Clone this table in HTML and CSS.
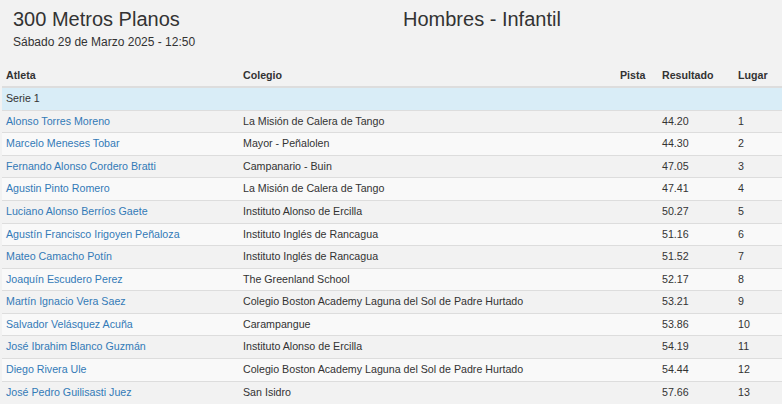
FILE: index.html
```html
<!DOCTYPE html>
<html lang="es">
<head>
<meta charset="utf-8">
<title>300 Metros Planos</title>
<link rel="stylesheet" href="styles.css">
</head>
<body>
<header class="head">
  <div class="head-row">
    <h1 class="title">300 Metros Planos</h1>
    <h2 class="category">Hombres - Infantil</h2>
  </div>
  <p class="date">Sábado 29 de Marzo 2025 - 12:50</p>
</header>
<table class="results">
  <colgroup>
    <col class="c-atleta"><col class="c-colegio"><col class="c-pista"><col class="c-res"><col class="c-lugar">
  </colgroup>
  <thead>
    <tr><th>Atleta</th><th>Colegio</th><th>Pista</th><th>Resultado</th><th>Lugar</th></tr>
  </thead>
  <tbody>
    <tr class="serie"><td colspan="5">Serie 1</td></tr>
    <tr><td><a href="#">Alonso Torres Moreno</a></td><td>La Misión de Calera de Tango</td><td></td><td>44.20</td><td>1</td></tr>
    <tr><td><a href="#">Marcelo Meneses Tobar</a></td><td>Mayor - Peñalolen</td><td></td><td>44.30</td><td>2</td></tr>
    <tr><td><a href="#">Fernando Alonso Cordero Bratti</a></td><td>Campanario - Buin</td><td></td><td>47.05</td><td>3</td></tr>
    <tr><td><a href="#">Agustin Pinto Romero</a></td><td>La Misión de Calera de Tango</td><td></td><td>47.41</td><td>4</td></tr>
    <tr><td><a href="#">Luciano Alonso Berríos Gaete</a></td><td>Instituto Alonso de Ercilla</td><td></td><td>50.27</td><td>5</td></tr>
    <tr><td><a href="#">Agustín Francisco Irigoyen Peñaloza</a></td><td>Instituto Inglés de Rancagua</td><td></td><td>51.16</td><td>6</td></tr>
    <tr><td><a href="#">Mateo Camacho Potín</a></td><td>Instituto Inglés de Rancagua</td><td></td><td>51.52</td><td>7</td></tr>
    <tr><td><a href="#">Joaquín Escudero Perez</a></td><td>The Greenland School</td><td></td><td>52.17</td><td>8</td></tr>
    <tr><td><a href="#">Martín Ignacio Vera Saez</a></td><td>Colegio Boston Academy Laguna del Sol de Padre Hurtado</td><td></td><td>53.21</td><td>9</td></tr>
    <tr><td><a href="#">Salvador Velásquez Acuña</a></td><td>Carampangue</td><td></td><td>53.86</td><td>10</td></tr>
    <tr><td><a href="#">José Ibrahim Blanco Guzmán</a></td><td>Instituto Alonso de Ercilla</td><td></td><td>54.19</td><td>11</td></tr>
    <tr><td><a href="#">Diego Rivera Ule</a></td><td>Colegio Boston Academy Laguna del Sol de Padre Hurtado</td><td></td><td>54.44</td><td>12</td></tr>
    <tr><td><a href="#">José Pedro Guilisasti Juez</a></td><td>San Isidro</td><td></td><td>57.66</td><td>13</td></tr>
  </tbody>
</table>
</body>
</html>
```
FILE: styles.css
```css
html, body {
  margin: 0;
  padding: 0;
  background: #f2f2f2;
  color: #333;
  font-family: "Liberation Sans", Arial, sans-serif;
}

.head {
  padding: 7px 0 0 13px;
}

.head-row {
  display: flex;
}

.title,
.category {
  margin: 0;
  font-size: 20px;
  line-height: 24px;
  font-weight: normal;
}

.title {
  width: 390px;
}

.date {
  margin: 3px 0 0;
  font-size: 12px;
  line-height: 17px;
}

.results {
  margin: 13.5px 0 0 2px;
  width: 780px;
  table-layout: fixed;
  border-collapse: collapse;
  border-spacing: 0;
  font-size: 10.67px;
}

.c-atleta { width: 237px; }
.c-colegio { width: 377px; }
.c-pista { width: 42px; }
.c-res { width: 76px; }
.c-lugar { width: 48px; }

.results th,
.results td {
  padding: 3px 4px;
  line-height: 15.58px;
  text-align: left;
  white-space: nowrap;
  overflow: hidden;
}

.results th {
  font-weight: bold;
  border-bottom: 2px solid #dddddd;
}

.results td {
  border-top: 1px solid #dddddd;
}

.results tbody tr:nth-child(odd) td {
  background: #f9f9f9;
}

.results tbody tr.serie td {
  background: #d9edf7;
}

.results a {
  color: #337ab7;
  text-decoration: none;
}
```
